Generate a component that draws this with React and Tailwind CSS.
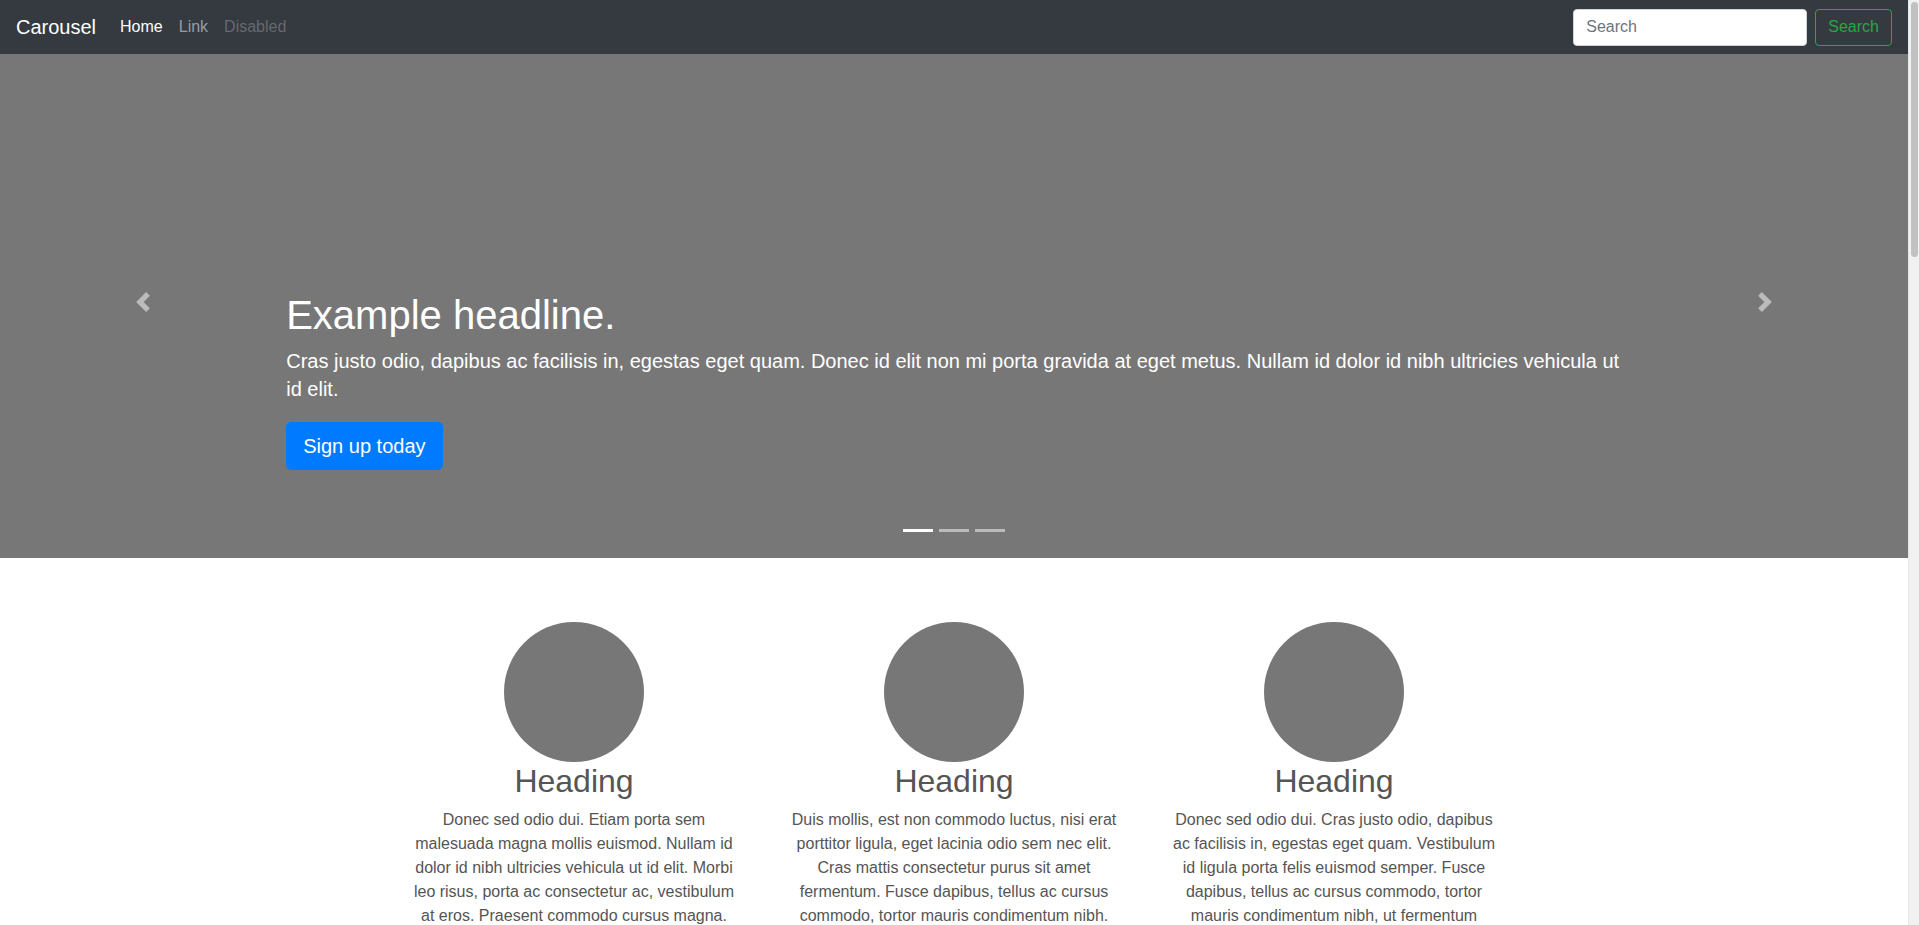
import React from "react";

const colunas = [
  {
    id: 1,
    texto:
      "Donec sed odio dui. Etiam porta sem malesuada magna mollis euismod. Nullam id dolor id nibh ultricies vehicula ut id elit. Morbi leo risus, porta ac consectetur ac, vestibulum at eros. Praesent commodo cursus magna.",
  },
  {
    id: 2,
    texto:
      "Duis mollis, est non commodo luctus, nisi erat porttitor ligula, eget lacinia odio sem nec elit. Cras mattis consectetur purus sit amet fermentum. Fusce dapibus, tellus ac cursus commodo, tortor mauris condimentum nibh.",
  },
  {
    id: 3,
    texto:
      "Donec sed odio dui. Cras justo odio, dapibus ac facilisis in, egestas eget quam. Vestibulum id ligula porta felis euismod semper. Fusce dapibus, tellus ac cursus commodo, tortor mauris condimentum nibh, ut fermentum massa justo sit amet risus.",
  },
];

function Seta({ lado }) {
  // mesmo desenho do ícone do carrossel do Bootstrap (viewBox 8x8)
  const d =
    lado === "prev"
      ? "M5.25 0l-4 4 4 4 1.5-1.5L4.25 4l2.5-2.5L5.25 0z"
      : "M2.75 0l-1.5 1.5L3.75 4l-2.5 2.5L2.75 8l4-4-4-4z";
  return (
    <svg width="20" height="20" viewBox="0 0 8 8" className="opacity-50">
      <path fill="#fff" d={d} />
    </svg>
  );
}

export default function App() {
  return (
    <div className="min-h-[1200px] bg-white font-['Liberation_Sans',Arial,sans-serif]">
      {/* barra de rolagem do navegador */}
      <div className="fixed top-0 right-0 bottom-0 w-[11px] bg-[#f1f1f1] border-l border-[#e6e6e6]">
        <div className="mx-auto mt-[2px] w-[7px] h-[255px] rounded-full bg-[#c1c1c1]"></div>
      </div>

      <div className="mr-[11px]">
        {/* Navbar */}
        <nav className="h-[54px] bg-[#343a40] flex items-center px-4">
          <a className="text-[20px] leading-[30px] text-white mr-4">Carousel</a>
          <ul className="flex items-center text-[16px] leading-[24px]">
            <li className="px-2 text-white">Home</li>
            <li className="px-2 text-white/50">Link</li>
            <li className="px-2 text-white/25">Disabled</li>
          </ul>
          <div className="ml-auto flex items-center">
            <input
              className="w-[234px] h-[37px] bg-white rounded-[4px] border border-[#ced4da] px-3 text-[16px] text-[#495057] placeholder:text-[#6c757d] mr-2 outline-none"
              placeholder="Search"
            />
            <button className="h-[37px] px-3 rounded-[4px] border border-[#28a745] text-[#28a745] text-[16px]">
              Search
            </button>
          </div>
        </nav>

        {/* Carrossel */}
        <div className="relative h-[504px] bg-[#777]">
          <div className="absolute left-0 top-0 bottom-0 w-[15%] flex items-center justify-center pb-2">
            <Seta lado="prev" />
          </div>
          <div className="absolute right-0 top-0 bottom-0 w-[15%] flex items-center justify-center pb-2">
            <Seta lado="next" />
          </div>

          <div className="absolute left-[15%] right-[15%] top-[237px] text-white">
            <h1 className="text-[40px] leading-[48px] font-normal mb-2">Example headline.</h1>
            <p className="text-[20px] leading-[28px] mb-[19px]">
              Cras justo odio, dapibus ac facilisis in, egestas eget quam. Donec id elit non mi porta
              gravida at eget metus. Nullam id dolor id nibh ultricies vehicula ut id elit.
            </p>
            <button className="bg-[#007bff] border border-[#007bff] text-white text-[20px] leading-[30px] px-4 py-2 rounded-[5px]">
              Sign up today
            </button>
          </div>

          <div className="absolute left-0 right-0 bottom-[26px] flex justify-center gap-[6px]">
            <span className="w-[30px] h-[3px] bg-white"></span>
            <span className="w-[30px] h-[3px] bg-white/50"></span>
            <span className="w-[30px] h-[3px] bg-white/50"></span>
          </div>
        </div>

        {/* Colunas de marketing */}
        <div className="max-w-[1140px] mx-auto mt-16 grid grid-cols-3 text-center text-[#555]">
          {colunas.map((col) => (
            <div key={col.id} className="px-[15px]">
              <div className="w-[140px] h-[140px] rounded-full bg-[#777] mx-auto"></div>
              <h2 className="text-[32px] leading-[38px] font-normal mb-2">Heading</h2>
              <p className="text-[16px] leading-[24px] mx-3">{col.texto}</p>
            </div>
          ))}
        </div>
      </div>
    </div>
  );
}
